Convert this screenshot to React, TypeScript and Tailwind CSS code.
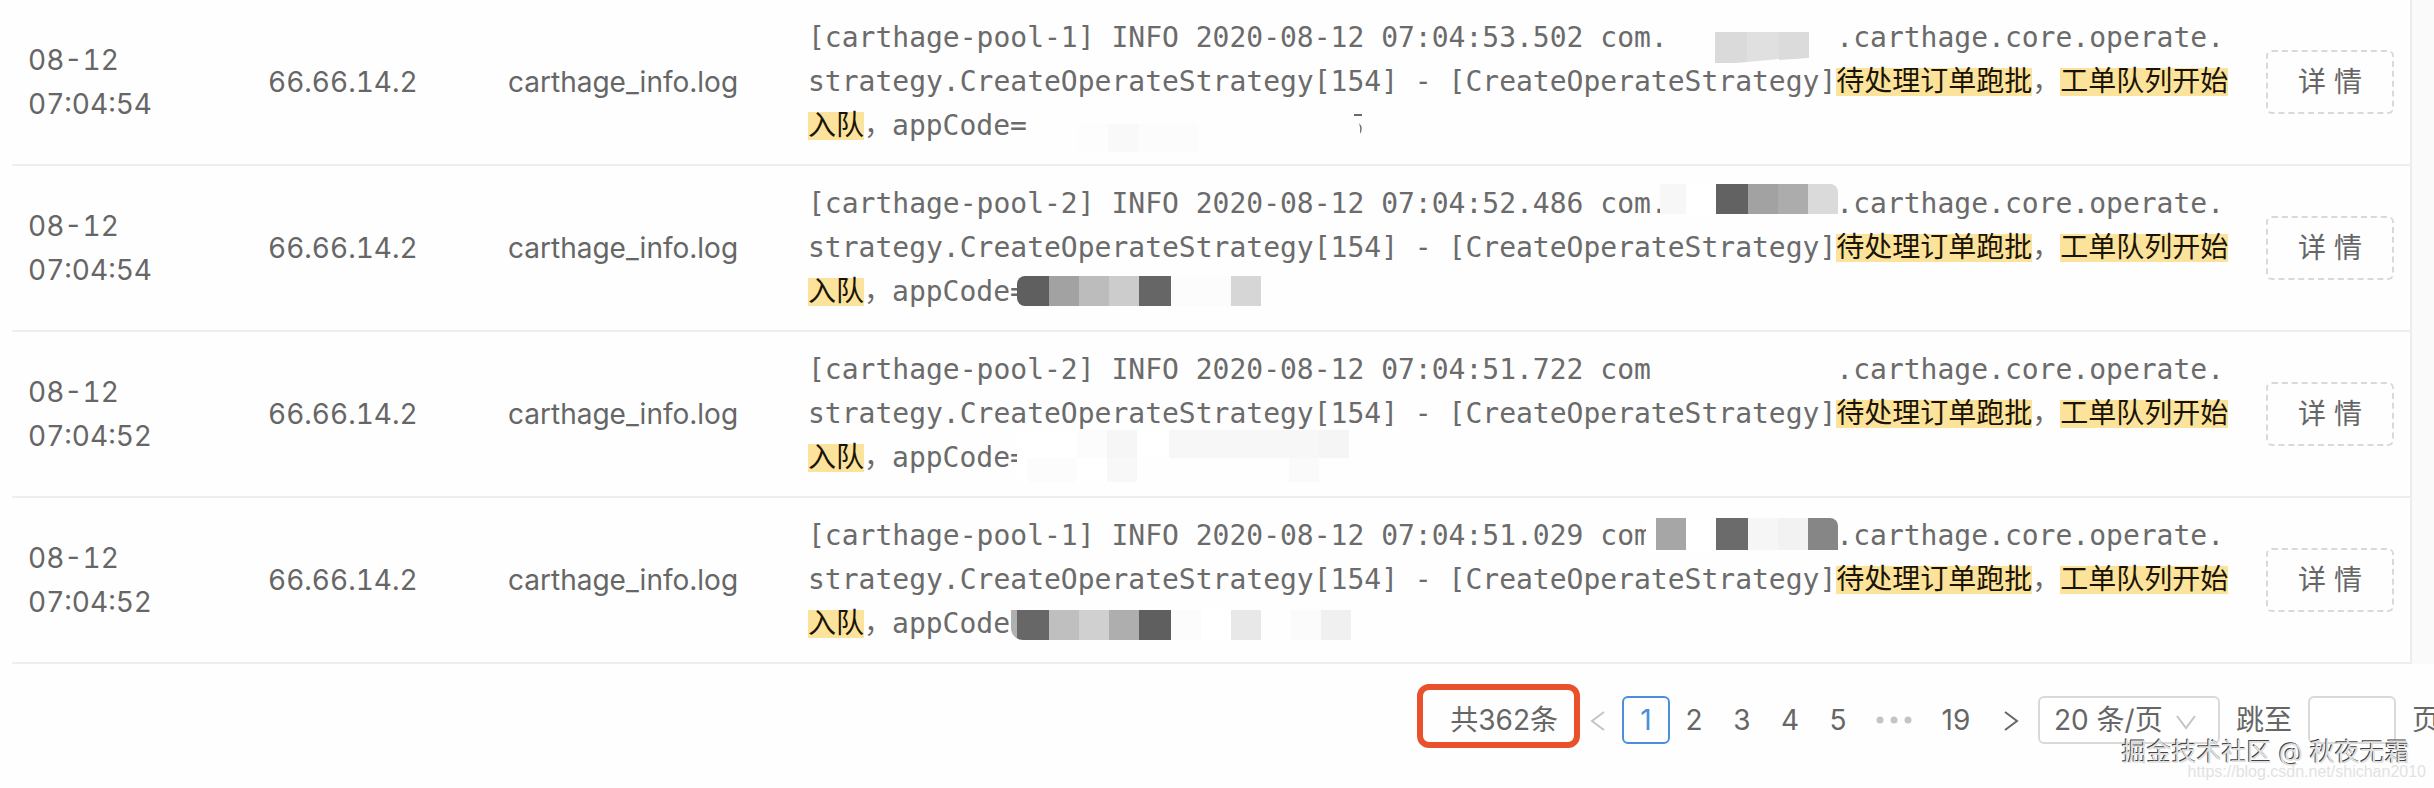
import { ChangeEvent, useState } from "react";

type Block = { w: string; c: string };

type LogRow = {
  id: number;
  time: string;
  pool: number;
  stamp: string;
  pkg: string;
  pkgMask: React.ReactNode;
  tail: string;
  codeMask: React.ReactNode;
};

const Blocks = ({ items, className }: { items: Block[]; className: string }) => (
  <span aria-hidden="true" className={`absolute flex overflow-hidden ${className}`}>
    {items.map((b, i) => (
      <span key={i} className={`h-full shrink-0 ${b.w} ${b.c}`} />
    ))}
  </span>
);

const rows: LogRow[] = [
  {
    id: 1,
    time: "07:04:54",
    pool: 1,
    stamp: "07:04:53.502",
    pkg: "com.",
    pkgMask: (
      <svg className="absolute left-[907px] top-4 h-8 w-[94px]" viewBox="0 0 94 32" aria-hidden="true">
        <path d="M0 0H32V30L20 31H0Z" fill="#dadada" />
        <path d="M32 0H64V27L32 30Z" fill="#e0e0e0" />
        <path d="M64 0H94V26L64 28Z" fill="#dbdbdb" />
      </svg>
    ),
    tail: "appCode=",
    codeMask: (
      <>
        <Blocks
          className="left-[270px] top-5 h-7"
          items={[
            { w: "w-[30px]", c: "bg-[#fdfdfd]" },
            { w: "w-[30px]", c: "bg-[#f9f9f9]" },
            { w: "w-[60px]", c: "bg-[#fcfcfc]" },
          ]}
        />
        <svg className="absolute left-[546px] top-2 h-8 w-3" viewBox="0 0 12 32" fill="#6b6b6b" aria-hidden="true">
          <path d="M0 2H8V4H0Z" />
          <path d="M5 11Q10 16 6 22Q7 16 5 11Z" />
        </svg>
      </>
    ),
  },
  {
    id: 2,
    time: "07:04:54",
    pool: 2,
    stamp: "07:04:52.486",
    pkg: "com.",
    pkgMask: (
      <Blocks
        className="left-[852px] top-[2px] h-[30px] rounded-tr-lg"
        items={[
          { w: "w-[26px]", c: "bg-[#f7f7f7]" },
          { w: "w-[30px]", c: "bg-white" },
          { w: "w-8", c: "bg-[#626262]" },
          { w: "w-[30px]", c: "bg-[#a2a2a2]" },
          { w: "w-[30px]", c: "bg-[#acacac]" },
          { w: "w-[30px]", c: "bg-[#dadada]" },
        ]}
      />
    ),
    tail: "appCode=",
    codeMask: (
      <Blocks
        className="left-[209px] top-[6px] h-[30px] rounded-l-lg"
        items={[
          { w: "w-8", c: "bg-[#5f5f5f]" },
          { w: "w-[30px]", c: "bg-[#a2a2a2]" },
          { w: "w-[30px]", c: "bg-[#bcbcbc]" },
          { w: "w-[30px]", c: "bg-[#cccccc]" },
          { w: "w-8", c: "bg-[#666666]" },
          { w: "w-[60px]", c: "bg-[#fcfcfc]" },
          { w: "w-[30px]", c: "bg-[#d6d6d6]" },
        ]}
      />
    ),
  },
  {
    id: 3,
    time: "07:04:52",
    pool: 2,
    stamp: "07:04:51.722",
    pkg: "com",
    pkgMask: null,
    tail: "appCode=",
    codeMask: (
      <>
        <Blocks
          className="left-[209px] -top-[6px] h-7"
          items={[
            { w: "w-[60px]", c: "bg-white" },
            { w: "w-[30px]", c: "bg-[#fcfcfc]" },
            { w: "w-[30px]", c: "bg-[#f6f6f6]" },
            { w: "w-8", c: "bg-white" },
            { w: "w-[150px]", c: "bg-[#f7f7f7]" },
            { w: "w-[30px]", c: "bg-[#f5f5f5]" },
          ]}
        />
        <Blocks
          className="left-[209px] top-[22px] h-6"
          items={[
            { w: "w-[10px]", c: "bg-white" },
            { w: "w-[50px]", c: "bg-[#fcfcfc]" },
            { w: "w-[30px]", c: "bg-white" },
            { w: "w-[30px]", c: "bg-[#f8f8f8]" },
            { w: "w-[152px]", c: "bg-[#fefefe]" },
            { w: "w-[30px]", c: "bg-[#fafafa]" },
          ]}
        />
      </>
    ),
  },
  {
    id: 4,
    time: "07:04:52",
    pool: 1,
    stamp: "07:04:51.029",
    pkg: "com",
    pkgMask: (
      <Blocks
        className="left-[838px] top-1 h-8 rounded-tr-lg"
        items={[
          { w: "w-[10px]", c: "bg-white" },
          { w: "w-[30px]", c: "bg-[#a6a6a6]" },
          { w: "w-[30px]", c: "bg-white" },
          { w: "w-8", c: "bg-[#6b6b6b]" },
          { w: "w-[30px]", c: "bg-[#f6f6f6]" },
          { w: "w-[30px]", c: "bg-[#f2f2f2]" },
          { w: "w-[30px]", c: "bg-[#868686]" },
        ]}
      />
    ),
    tail: "appCode",
    codeMask: (
      <Blocks
        className="left-[203px] top-2 h-[30px] rounded-bl-xl"
        items={[
          { w: "w-[6px]", c: "bg-[#b0b0b0]" },
          { w: "w-8", c: "bg-[#676767]" },
          { w: "w-[30px]", c: "bg-[#bfbfbf]" },
          { w: "w-[30px]", c: "bg-[#d0d0d0]" },
          { w: "w-[30px]", c: "bg-[#aeaeae]" },
          { w: "w-8", c: "bg-[#5f5f5f]" },
          { w: "w-[30px]", c: "bg-[#fcfcfc]" },
          { w: "w-[30px]", c: "bg-white" },
          { w: "w-[30px]", c: "bg-[#e8e8e8]" },
          { w: "w-[30px]", c: "bg-[#fefefe]" },
          { w: "w-[30px]", c: "bg-[#fbfbfb]" },
          { w: "w-[30px]", c: "bg-[#f0f0f0]" },
        ]}
      />
    ),
  },
];

const Mark = ({ children }: { children: string }) => (
  <mark className="inline-block bg-[#fce39b] leading-7 text-[#1a1408]">{children}</mark>
);

const LogMessage = ({ row }: { row: LogRow }) => (
  <div className="whitespace-pre font-['DejaVu_Sans_Mono','Noto_Sans_CJK_SC',monospace] text-[#6b6b6b]">
    <div className="relative h-11">
      {`[carthage-pool-${row.pool}] INFO 2020-08-12 ${row.stamp} ${row.pkg.padEnd(14)}.carthage.core.operate.`}
      {row.pkgMask}
    </div>
    <div className="h-11">
      strategy.CreateOperateStrategy[154] - [CreateOperateStrategy]
      <Mark>待处理订单跑批</Mark>，<Mark>工单队列开始</Mark>
    </div>
    <div className="relative h-11">
      <Mark>入队</Mark>，{row.tail}
      {row.codeMask}
    </div>
  </div>
);

const LogTable = () => (
  <div className="flex">
    <div className="flex-1 pl-3">
      <table className="w-full table-fixed border-r-2 border-[#ececec] text-left leading-11">
        <colgroup>
          <col className="w-60" />
          <col className="w-60" />
          <col className="w-[300px]" />
          <col />
          <col className="w-[161px]" />
        </colgroup>
        <tbody>
          {rows.map((row) => (
            <tr key={row.id} className="border-b-2 border-[#eeeeee]">
              <td className="px-4 py-4 tabular-nums">
                08-12
                <br />
                {row.time}
              </td>
              <td className="px-4 py-4 tabular-nums">66.66.14.2</td>
              <td className="px-4 py-4">carthage_info.log</td>
              <td className="py-4 pl-4">
                <LogMessage row={row} />
              </td>
              <td className="py-4 pr-4 text-right">
                <button
                  type="button"
                  className="h-16 w-32 rounded-md border-2 border-dashed border-[#d9d9d9] text-center align-middle"
                >
                  详 情
                </button>
              </td>
            </tr>
          ))}
        </tbody>
      </table>
    </div>
    <div className="w-[22px] bg-[#fafafa]" />
  </div>
);

const Pagination = () => {
  const [page, setPage] = useState(1);
  const [jump, setJump] = useState("");

  return (
    <nav aria-label="分页" className="flex h-12 items-center justify-end whitespace-nowrap">
      <span className="relative flex h-12 w-[163px] items-center justify-end pr-[22px]">
        共362条
        <span className="absolute inset-x-0 -bottom-1 -top-3 rounded-xl border-6 border-[#e8512b]" />
      </span>
      <button type="button" aria-label="上一页" className="flex w-[42px] pl-[6px]">
        <svg className="h-6 w-6" viewBox="0 0 24 24" fill="none" stroke="#c4c4c4" strokeWidth="2">
          <path d="M18 4L6 13L18 22" />
        </svg>
      </button>
      {[1, 2, 3, 4, 5].map((n) => (
        <button
          key={n}
          type="button"
          onClick={() => setPage(n)}
          className={
            n === page
              ? "h-12 w-12 rounded-md border-2 border-[#4a8fdc] text-[#4a8fdc]"
              : "h-12 w-12"
          }
        >
          {n}
        </button>
      ))}
      <span className="flex w-16 justify-center">
        <svg className="h-2 w-9" viewBox="0 0 36 8" fill="#c4c4c4" aria-hidden="true">
          <circle cx="4" cy="4" r="3.5" />
          <circle cx="18" cy="4" r="3.5" />
          <circle cx="32" cy="4" r="3.5" />
        </svg>
      </span>
      <button type="button" onClick={() => setPage(19)} className="h-12 w-15">
        19
      </button>
      <button type="button" aria-label="下一页" className="flex w-[52px] justify-center">
        <svg className="h-6 w-6" viewBox="0 0 24 24" fill="none" stroke="#666666" strokeWidth="2">
          <path d="M5 4L17 13L5 22" />
        </svg>
      </button>
      <span className="relative">
        <select
          aria-label="每页条数"
          className="block h-12 w-[182px] appearance-none rounded-md border-2 border-[#d9d9d9] bg-white pl-[14px]"
        >
          <option>20 条/页</option>
        </select>
        <svg
          className="pointer-events-none absolute right-[22px] top-4 h-5 w-6"
          viewBox="0 0 24 20"
          fill="none"
          stroke="#c4c4c4"
          strokeWidth="2"
          aria-hidden="true"
        >
          <path d="M3 4L12 16L21 4" />
        </svg>
      </span>
      <label htmlFor="jump" className="ml-4">
        跳至
      </label>
      <input
        id="jump"
        value={jump}
        onChange={(e: ChangeEvent<HTMLInputElement>) => setJump(e.target.value)}
        className="ml-4 h-12 w-[88px] rounded-md border-2 border-[#d9d9d9] bg-white px-3"
      />
      <span className="-mr-[6px] ml-4">页</span>
    </nav>
  );
};

export default function App() {
  return (
    <main className="relative min-h-screen overflow-hidden bg-[#fefefe] font-[Inter,'Noto_Sans_CJK_SC',sans-serif] text-[28px] text-[#666666]">
      <LogTable />
      <div className="mt-8">
        <Pagination />
      </div>
      <div className="absolute bottom-2 right-2 flex flex-col items-end">
        <p className="mr-4 text-[25px] leading-6 text-[#e0e0e0] [text-shadow:-1px_-1px_0_#444444]">
          掘金技术社区 @ 秋夜无霜
        </p>
        <p className="font-['Liberation_Sans',sans-serif] text-base leading-4 text-[#e2e2e2]">
          https://blog.csdn.net/shichan2010
        </p>
      </div>
    </main>
  );
}
